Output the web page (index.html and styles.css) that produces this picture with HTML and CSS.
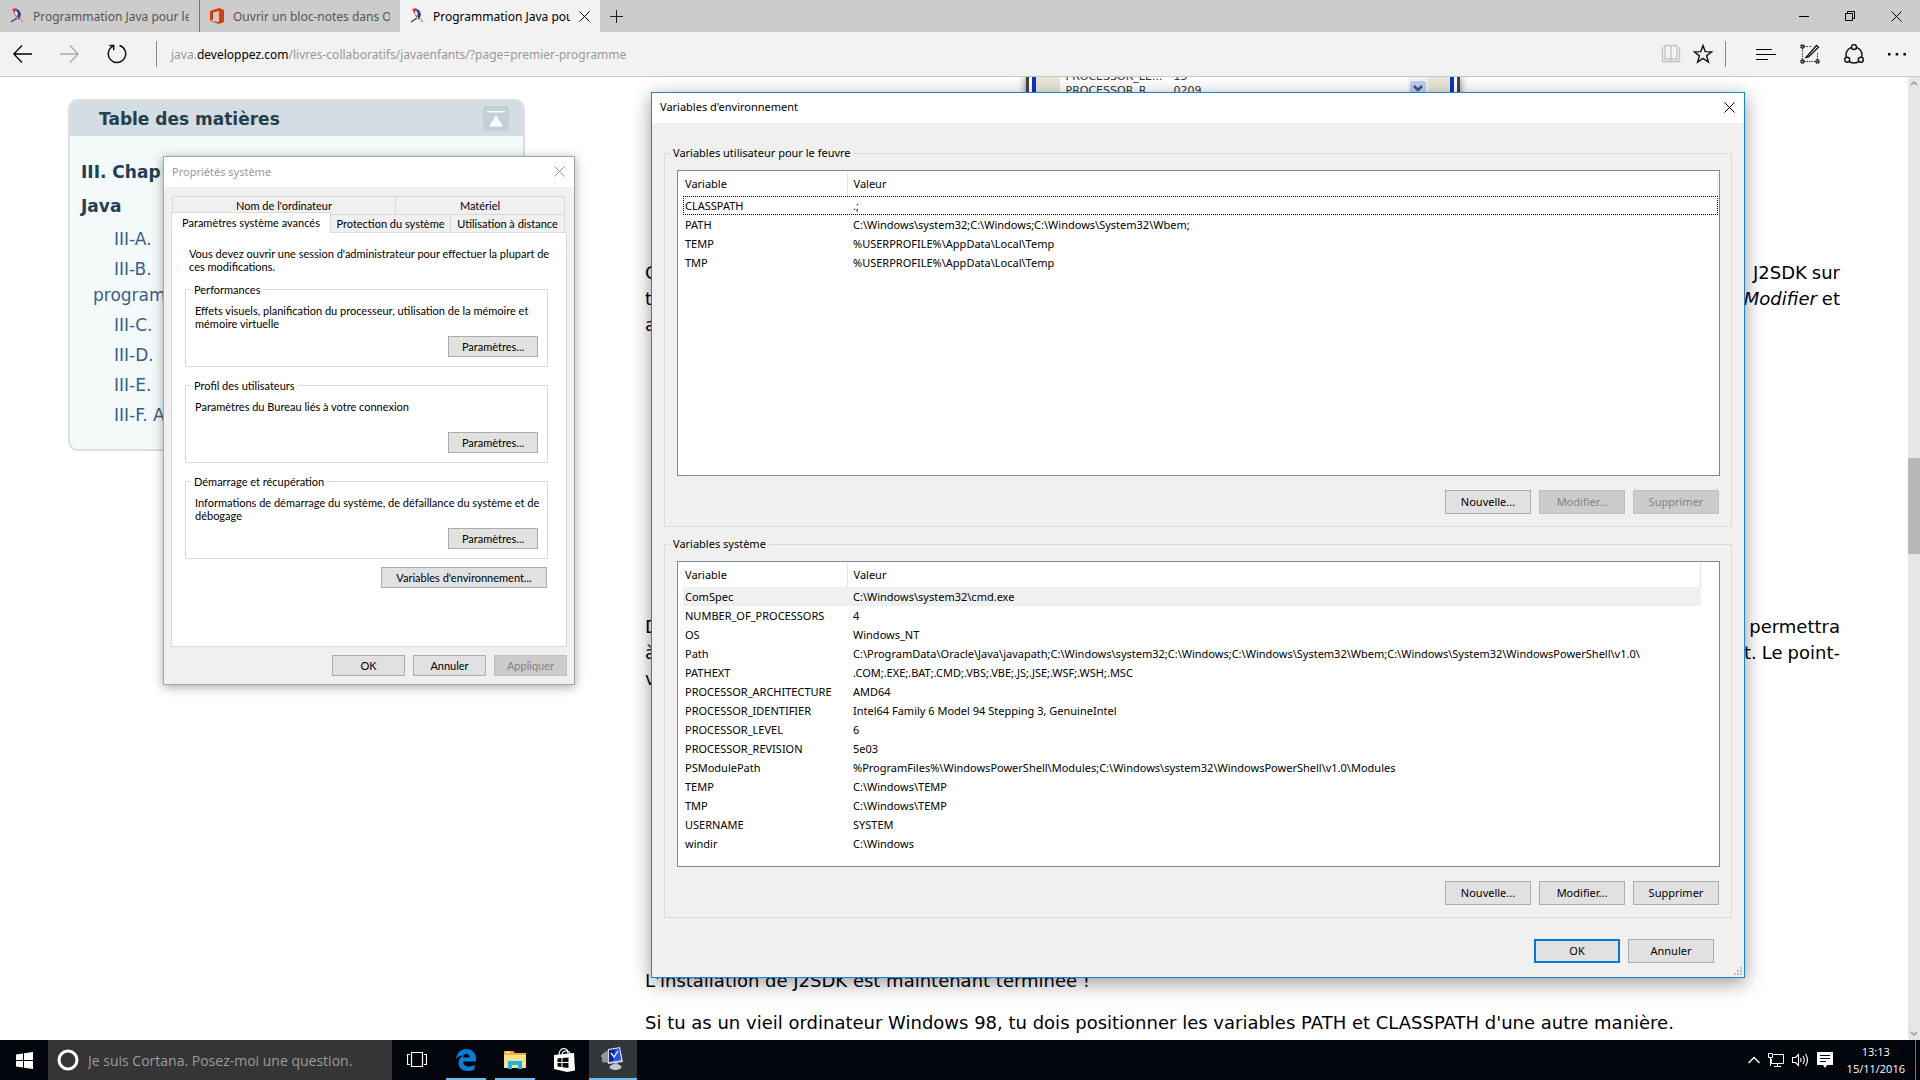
FILE: index.html
```html
<!DOCTYPE html>
<html lang="fr">
<head>
<meta charset="utf-8">
<title>Programmation Java pour les enfants</title>
<link rel="stylesheet" href="styles.css">
</head>
<body>
<svg class="defs" width="0" height="0" aria-hidden="true">
  <symbol id="bird" viewBox="0 0 14 16">
    <path d="M2 1 6 0 9 4 8 9 6 9 4 5Z" fill="#e23a3a"/>
    <path d="M5 3 8 4 7 8 5 6Z" fill="#fff"/>
    <path d="M6 1 9 2 11 6 10 10 8 12 8 6Z" fill="#2a3f9c"/>
    <path d="M7 10 1 14" stroke="#2a3f9c" stroke-width="1.500"/>
    <path d="M9 10 13 14" stroke="#e88a7a" stroke-width="1.500"/>
  </symbol>
  <symbol id="cross" viewBox="0 0 11 11">
    <path d="M.5.5l10 10M10.500.5l-10 10" fill="none" stroke="currentColor"/>
  </symbol>
</svg>

<header class="chrome">
  <div class="tabstrip">
    <div class="tab tab-ruled">
      <svg class="tab-icon" width="14" height="16"><use href="#bird"/></svg>
      <a class="tab-title" href="#">Programmation Java pour les enfants</a>
    </div>
    <div class="tab">
      <svg class="tab-icon" width="14" height="16" viewBox="0 0 14 16"><path d="M0 3 9 0 14 2V14L9 16 0 13 9 14V3L3 4.500V11.500L0 13Z" fill="#dc3e00"/></svg>
      <a class="tab-title" href="#">Ouvrir un bloc-notes dans OneNote</a>
    </div>
    <div class="tab tab-active">
      <svg class="tab-icon" width="14" height="16"><use href="#bird"/></svg>
      <a class="tab-title" href="#">Programmation Java pour les enfants</a>
      <button class="icon-button" aria-label="Fermer l'onglet"><svg width="11" height="11"><use href="#cross"/></svg></button>
    </div>
    <button class="icon-button new-tab" aria-label="Nouvel onglet"><svg width="13" height="13" viewBox="0 0 13 13"><path d="M6.500 0v13M0 6.500h13" stroke="#222"/></svg></button>
    <div class="window-controls">
      <button class="icon-button" aria-label="Réduire"><svg width="10" height="10" viewBox="0 0 10 10"><path d="M0 5.500h10" stroke="#000"/></svg></button>
      <button class="icon-button" aria-label="Restaurer"><svg width="10" height="10" viewBox="0 0 10 10"><path d="M.5 2.500h7v7h-7zM2.500 2.500v-2h7v7h-2" fill="none" stroke="#000"/></svg></button>
      <button class="icon-button" aria-label="Fermer"><svg width="11" height="11"><use href="#cross"/></svg></button>
    </div>
  </div>
  <div class="toolbar">
    <nav class="nav-buttons">
      <button class="icon-button" aria-label="Précédent"><svg width="19" height="18" viewBox="0 0 19 18"><path d="M19 9H1M9 .5.8 9 9 17.500" fill="none" stroke="#000" stroke-width="1.300"/></svg></button>
      <button class="icon-button" aria-label="Suivant"><svg width="19" height="18" viewBox="0 0 19 18"><path d="M0 9h18M10 .5 18.200 9 10 17.500" fill="none" stroke="#a8a8a8" stroke-width="1.300"/></svg></button>
      <button class="icon-button" aria-label="Actualiser"><svg width="20" height="20" viewBox="0 0 20 20"><path d="M12.500 1.500a8.700 8.700 0 1 1-6.500.6M2.500 1.600h4.200v4.600" fill="none" stroke="#111" stroke-width="1.500"/></svg></button>
    </nav>
    <a class="address" href="#">java.<b>developpez.com</b>/livres-collaboratifs/javaenfants/?page=premier-programme</a>
    <div class="page-tools">
      <button class="icon-button" aria-label="Mode lecture"><svg width="20" height="20" viewBox="0 0 20 20"><path d="M1.500 3v14.500H9q1 0 1 1 0-1 1-1h7.500V3M4 1.500h4q2 0 2 1.500 0-1.500 2-1.500h4V15h-4q-2 0-2 1.500Q10 15 8 15H4zM10 3v14" fill="none" stroke="#c4c4c4" stroke-width="1.300"/></svg></button>
      <button class="icon-button" aria-label="Favoris"><svg width="20" height="20" viewBox="0 0 20 20"><path d="M10 1.500l2.200 6.100 6.500.2-5.100 4 1.800 6.300L10 14.400l-5.400 3.700 1.800-6.300-5.100-4 6.500-.2z" fill="none" stroke="#111" stroke-width="1.400"/></svg></button>
    </div>
    <div class="hub-tools">
      <button class="icon-button" aria-label="Hub"><svg width="20" height="12" viewBox="0 0 20 12"><path d="M0 1.500h16M0 6.500h20M0 11.500h12" stroke="#000"/></svg></button>
      <button class="icon-button" aria-label="Annoter"><svg width="20" height="20" viewBox="0 0 20 20"><path d="M4 2.500h8M2.500 4v12M4 17.500h12M17.500 9v7" fill="none" stroke="#333" stroke-dasharray="1.500 1"/><path d="M1 1h3v3H1zM1 16h3v3H1zM16 16h3v3h-3z" fill="#888" stroke="#111"/><path d="M6 13.500 16.500 1.500l2 1.700L8.500 13z" fill="#fff" stroke="#111" stroke-width="1.300"/></svg></button>
      <button class="icon-button" aria-label="Partager"><svg width="20" height="20" viewBox="0 0 20 20" fill="#f2f2f2" stroke="#111" stroke-width="1.400"><circle cx="10" cy="11" r="8"/><circle cx="10" cy="3" r="2.500"/><circle cx="3.200" cy="15.800" r="2.500"/><circle cx="16.800" cy="15.800" r="2.500"/></svg></button>
      <button class="icon-button" aria-label="Plus"><svg width="18" height="4" viewBox="0 0 18 4"><path d="M0 1h2.500v2.500H0zM7.700 1h2.500v2.500H7.700zM15.400 1h2.500v2.500h-2.500z"/></svg></button>
    </div>
  </div>
</header>

<main class="viewport">
  <div class="page">
    <aside class="toc">
      <div class="toc-head">
        <h2>Table des matières</h2>
        <a class="toc-top" href="#" aria-label="Haut de page"><svg width="18" height="16" viewBox="0 0 18 16"><path d="M0 0h18v1.500H0zM9 4l6 10v1.500H3V14z" fill="#fff"/></svg></a>
      </div>
      <h3>III. Chap<br>Java</h3>
      <ul>
        <li><a href="#">III-A.</a></li>
        <li><a href="#">III-B.<br>programm</a></li>
        <li><a href="#">III-C.</a></li>
        <li><a href="#">III-D.</a></li>
        <li><a href="#">III-E.</a></li>
        <li><a href="#">III-F. A</a></li>
      </ul>
    </aside>
    <article class="article">
      <div class="figure figure-first">
        <div class="xp">
          <div class="xp-list">
            <div class="xp-rows">
              <span>PROCESSOR_LE...</span><span>15</span>
              <span>PROCESSOR_R...</span><span>0209</span>
            </div>
            <div class="xp-scroll"><svg width="16" height="16" viewBox="0 0 16 16"><rect width="16" height="16" rx="2" fill="#bccdf2"/><path d="M4 5l4 4 4-4" fill="none" stroke="#3f5287" stroke-width="2.500"/></svg></div>
          </div>
        </div>
      </div>
      <div class="para">
        <p class="line"><span>C</span><span class="words"><span>J2SDK</span><span>sur</span></span></p>
        <p class="line"><span>t</span><span class="words"><i>Modifier</i><span>et</span></span></p>
        <p class="line"><span>a</span></p>
      </div>
      <div class="figure"></div>
      <div class="para">
        <p class="line"><span>D</span><span>permettra</span></p>
        <p class="line"><span>à</span><span class="words"><span>t.</span><span>Le</span><span>point-</span></span></p>
        <p class="line"><span>v</span></p>
      </div>
      <div class="figure"></div>
      <p class="para">L'installation de J2SDK est maintenant terminée !</p>
      <p class="para">Si tu as un vieil ordinateur Windows 98, tu dois positionner les variables PATH et CLASSPATH d'une autre manière.</p>
    </article>
  </div>
  <div class="scrollbar">
    <svg width="8" height="6" viewBox="0 0 8 6"><path d="M1 5l3-3 3 3" fill="none" stroke="#999" stroke-width="1.500"/></svg>
    <div class="scroll-thumb"></div>
    <svg width="8" height="6" viewBox="0 0 8 6"><path d="M1 1l3 3 3-3" fill="none" stroke="#999" stroke-width="1.500"/></svg>
  </div>
</main>

<section class="window props" aria-label="Propriétés système">
  <div class="titlebar">
    <span>Propriétés système</span>
    <button class="icon-button" aria-label="Fermer"><svg width="11" height="11"><use href="#cross"/></svg></button>
  </div>
  <div class="props-body">
    <div class="tabs-back">
      <button class="ptab">Nom de l'ordinateur</button>
      <button class="ptab">Matériel</button>
    </div>
    <div class="tabs-front">
      <button class="ptab ptab-active">Paramètres système avancés</button>
      <button class="ptab">Protection du système</button>
      <button class="ptab">Utilisation à distance</button>
    </div>
    <div class="panel">
      <p class="intro">Vous devez ouvrir une session d'administrateur pour effectuer la plupart de ces modifications.</p>
      <fieldset class="pgroup">
        <legend>Performances</legend>
        <p>Effets visuels, planification du processeur, utilisation de la mémoire et mémoire virtuelle</p>
        <button class="button">Paramètres...</button>
      </fieldset>
      <fieldset class="pgroup">
        <legend>Profil des utilisateurs</legend>
        <p>Paramètres du Bureau liés à votre connexion</p>
        <button class="button">Paramètres...</button>
      </fieldset>
      <fieldset class="pgroup">
        <legend>Démarrage et récupération</legend>
        <p>Informations de démarrage du système, de défaillance du système et de débogage</p>
        <button class="button">Paramètres...</button>
      </fieldset>
      <button class="button env-button">Variables d'environnement...</button>
    </div>
    <div class="props-actions">
      <button class="button">OK</button>
      <button class="button">Annuler</button>
      <button class="button" disabled>Appliquer</button>
    </div>
  </div>
</section>

<section class="window env" aria-label="Variables d'environnement">
  <div class="titlebar">
    <span>Variables d'environnement</span>
    <button class="icon-button" aria-label="Fermer"><svg width="11" height="11"><use href="#cross"/></svg></button>
  </div>
  <div class="env-body">
    <fieldset class="egroup">
      <legend>Variables utilisateur pour le feuvre</legend>
      <div class="list">
        <table class="vars">
          <thead><tr><th>Variable</th><th>Valeur</th></tr></thead>
          <tbody>
            <tr class="focused"><td>CLASSPATH</td><td>.;</td></tr>
            <tr><td>PATH</td><td>C:\Windows\system32;C:\Windows;C:\Windows\System32\Wbem;</td></tr>
            <tr><td>TEMP</td><td>%USERPROFILE%\AppData\Local\Temp</td></tr>
            <tr><td>TMP</td><td>%USERPROFILE%\AppData\Local\Temp</td></tr>
          </tbody>
        </table>
      </div>
      <div class="actions">
        <button class="button">Nouvelle...</button>
        <button class="button" disabled>Modifier...</button>
        <button class="button" disabled>Supprimer</button>
      </div>
    </fieldset>
    <fieldset class="egroup">
      <legend>Variables système</legend>
      <div class="list list-inset">
        <table class="vars">
          <thead><tr><th>Variable</th><th>Valeur</th></tr></thead>
          <tbody>
            <tr class="selected"><td>ComSpec</td><td>C:\Windows\system32\cmd.exe</td></tr>
            <tr><td>NUMBER_OF_PROCESSORS</td><td>4</td></tr>
            <tr><td>OS</td><td>Windows_NT</td></tr>
            <tr><td>Path</td><td>C:\ProgramData\Oracle\Java\javapath;C:\Windows\system32;C:\Windows;C:\Windows\System32\Wbem;C:\Windows\System32\WindowsPowerShell\v1.0\</td></tr>
            <tr><td>PATHEXT</td><td>.COM;.EXE;.BAT;.CMD;.VBS;.VBE;.JS;.JSE;.WSF;.WSH;.MSC</td></tr>
            <tr><td>PROCESSOR_ARCHITECTURE</td><td>AMD64</td></tr>
            <tr><td>PROCESSOR_IDENTIFIER</td><td>Intel64 Family 6 Model 94 Stepping 3, GenuineIntel</td></tr>
            <tr><td>PROCESSOR_LEVEL</td><td>6</td></tr>
            <tr><td>PROCESSOR_REVISION</td><td>5e03</td></tr>
            <tr><td>PSModulePath</td><td>%ProgramFiles%\WindowsPowerShell\Modules;C:\Windows\system32\WindowsPowerShell\v1.0\Modules</td></tr>
            <tr><td>TEMP</td><td>C:\Windows\TEMP</td></tr>
            <tr><td>TMP</td><td>C:\Windows\TEMP</td></tr>
            <tr><td>USERNAME</td><td>SYSTEM</td></tr>
            <tr><td>windir</td><td>C:\Windows</td></tr>
          </tbody>
        </table>
      </div>
      <div class="actions">
        <button class="button">Nouvelle...</button>
        <button class="button">Modifier...</button>
        <button class="button">Supprimer</button>
      </div>
    </fieldset>
    <div class="actions env-actions">
      <button class="button button-default">OK</button>
      <button class="button">Annuler</button>
    </div>
  </div>
  <svg class="grip" width="8" height="8" viewBox="0 0 8 8"><path d="M6 0h2v2H6zM3 3h2v2H3zM6 3h2v2H6zM0 6h2v2H0zM3 6h2v2H3zM6 6h2v2H6z" fill="#bfbfbf"/></svg>
</section>

<footer class="taskbar">
  <button class="task start" aria-label="Démarrer"><svg width="17" height="17" viewBox="0 0 17 17"><path d="M0 2.500 7 1.500V8H0zM8 1.300 17 0V8H8zM0 9h7v6.500L0 14.500zM8 9h9v8L8 15.700z" fill="#fff"/></svg></button>
  <label class="search">
    <svg width="22" height="22" viewBox="0 0 22 22"><circle cx="11" cy="11" r="9" fill="none" stroke="#fff" stroke-width="3"/></svg>
    <input type="text" placeholder="Je suis Cortana. Posez-moi une question." aria-label="Recherche">
  </label>
  <div class="tasks">
    <button class="task" aria-label="Affichage des tâches"><svg width="20" height="16" viewBox="0 0 20 16"><path d="M4.500.5h11v14h-11zM3 2.500H.5v10H3M17 2.500h2.500v10H17" fill="none" stroke="#fff" stroke-width="1.200"/></svg></button>
    <button class="task running" aria-label="Edge"><svg width="20" height="22" viewBox="0 0 20 22"><path d="M0 10C1 3.500 5 0 10.500 0 16.500 0 20 4.500 20 10v2.500H7c.2 3.500 3 5 6 5 2.300 0 4-.6 5.500-1.500v4.300C16.800 21.400 14.500 22 12 22 6 22 2.500 18.500 2.500 14c0-3.500 2-6 5-7.500C4.500 6.500 1.500 7.500 0 10zm7-1.500h6.700C13.700 6 12.500 4.700 10.500 4.700S7.200 6.200 7 8.500z" fill="#0a7ddb"/></svg></button>
    <button class="task running" aria-label="Explorateur"><svg width="22" height="18" viewBox="0 0 22 18"><path d="M0 0h9l2 2h11v15H0z" fill="#e9b43c"/><path d="M0 4h22v13H0z" fill="#fbe08b"/><path d="M4 18v-8h14v8h-4v-4H8v4z" fill="#1cb4ec"/><path d="M2 1h4v1H2z" fill="#fff"/></svg></button>
    <button class="task" aria-label="Store"><svg width="21" height="24" viewBox="0 0 21 24"><path d="M0 7 20 5l1 17.500L13 24 0 21z" fill="#fff"/><path d="M5 7C5 2 8 .6 10 .6S14 2 14 6M8 6c1-4 8-4 8 0" fill="none" stroke="#fff" stroke-width="1.200"/><path d="M3.500 10.500 7.500 10v4h-4zM8.500 10l6-.6V14h-6zM3.500 15h4v4l-4-.6zM8.500 15h6v5l-6-.8z" fill="#05080d"/></svg></button>
    <button class="task current" aria-label="Propriétés système"><svg width="24" height="24" viewBox="0 0 24 24"><path d="M1 7 7 3v13l-6-1z" fill="#8f979e"/><path d="M0 8h2v2H0z" fill="#4c4"/><path d="M7 2 19 0l3 15-15 2z" fill="#d4d9df"/><path d="M8 3 18 1.500 20 13 8 15z" fill="#0c1fae"/><path d="M14 2.200 18 1.500 20 13 12 14.400z" fill="#2f55e8"/><path d="M10 6l3 4 4-6" fill="none" stroke="#fff" stroke-width="1.300"/><path d="M13 16h4v3h-4z" fill="#999"/><ellipse cx="14.500" cy="20" rx="6" ry="3" fill="#c4c8cc"/></svg></button>
  </div>
  <div class="tray">
    <svg width="12" height="8" viewBox="0 0 12 8"><path d="M.5 7 6 1.500 11.500 7" fill="none" stroke="#fff" stroke-width="1.400"/></svg>
    <svg width="16" height="14" viewBox="0 0 16 14"><path d="M5.500 1.500h10v9h-12V6M9.500 11v2M6 13.500h7M.5.5h4v4h-4zM2.500 5v8" fill="none" stroke="#fff"/></svg>
    <svg width="17" height="14" viewBox="0 0 17 14"><path d="M.5 4.500h3l3-3v11l-3-3h-3zM8.500 5q1 2 0 4M11 3q2.500 4 0 8M13.500 1q4 6 0 12" fill="none" stroke="#fff" stroke-width="1.100"/></svg>
    <svg width="16" height="16" viewBox="0 0 16 16"><path d="M0 0h16v13h-6l-2 3-2-3H0z" fill="#fff"/><path d="M3 3.500h10M3 6.500h10M3 9.500h6" stroke="#05080d"/></svg>
    <div class="clock"><time>13:13</time><time>15/11/2016</time></div>
  </div>
</footer>
</body>
</html>
```
FILE: styles.css
```css
* {
  box-sizing: border-box;
}

body {
  margin: 0;
  height: 100vh;
  display: flex;
  flex-direction: column;
  overflow: hidden;
  background: #fff;
  color: #000;
  font-family: "Noto Sans", "Segoe UI", sans-serif;
  font-size: 11px;
}

button,
input {
  font: inherit;
  color: inherit;
}

a {
  color: inherit;
  text-decoration: none;
}

p,
h2,
h3,
ul {
  margin: 0;
  padding: 0;
}

svg {
  display: block;
  flex: none;
}

.defs {
  position: absolute;
}

.icon-button {
  display: flex;
  align-items: center;
  justify-content: center;
  padding: 0;
  border: 0;
  background: none;
}

/* Browser chrome */

.chrome {
  flex: none;
  background: #f2f2f2;
  border-bottom: 1px solid #c8c8c8;
}

.tabstrip {
  display: flex;
  height: 32px;
  background: #ccc;
  color: #555;
  font-size: 12px;
}

.tab {
  display: flex;
  align-items: center;
  gap: 9px;
  width: 200px;
  padding: 0 10px;
}

.tab-ruled {
  border-right: 1px solid #777;
}

.tab-active {
  background: #f2f2f2;
  color: #000;
}

.tab-title {
  flex: 1;
  min-width: 0;
  overflow: hidden;
  white-space: nowrap;
}

.new-tab {
  width: 32px;
}

.window-controls {
  display: flex;
  gap: 36px;
  margin-left: auto;
  padding-right: 18px;
  color: #000;
}

.toolbar {
  display: flex;
  align-items: center;
  height: 44px;
}

.nav-buttons {
  display: flex;
  align-items: center;
  gap: 28px;
  height: 26px;
  padding: 0 29px 0 13px;
  border-right: 1px solid #8a8a8a;
}

.address {
  flex: 1;
  padding-left: 14px;
  color: #999;
  font-size: 12px;
}

.address b {
  color: #000;
  font-weight: 400;
}

.page-tools {
  display: flex;
  gap: 12px;
  align-items: center;
  height: 26px;
  padding-right: 12px;
  border-right: 1px solid #8a8a8a;
}

.hub-tools {
  display: flex;
  gap: 24px;
  align-items: center;
  padding: 0 14px 0 30px;
}

/* Web page */

.viewport {
  flex: 1;
  min-height: 0;
  display: flex;
  font-family: Verdana, "DejaVu Sans", sans-serif;
  font-size: 18px;
  line-height: 26px;
}

.page {
  flex: 1;
  min-width: 0;
  display: flex;
  align-items: flex-start;
  gap: 120px;
  padding: 0 68px;
  overflow: hidden;
}

.toc {
  flex: none;
  width: 457px;
  margin-top: 22px;
  padding-bottom: 21px;
  border: 2px solid #dcdedf;
  border-radius: 10px;
  background: #f4f9fa;
  color: #365f88;
  font-size: 17px;
  overflow: hidden;
}

.toc-head {
  display: flex;
  align-items: center;
  justify-content: space-between;
  height: 35px;
  padding: 0 14px 0 29px;
  background: #d4dde3;
  color: #263f4c;
}

.toc h2,
.toc h3 {
  font-size: 17px;
}

.toc h3 {
  margin: 19px 0 0 11px;
  color: #1e3f55;
  line-height: 34px;
}

.toc-top {
  display: flex;
  align-items: center;
  justify-content: center;
  width: 26px;
  height: 25px;
  border-radius: 4px;
  background: #c3d0d6;
}

.toc ul {
  display: grid;
  gap: 4px;
  padding: 3px 0 0 23px;
  list-style: none;
}

.toc li {
  text-indent: 21px;
}

.article {
  flex: 1;
  min-width: 0;
}

.para {
  margin-bottom: 16px;
}

.line {
  display: flex;
  justify-content: space-between;
}

.words {
  display: flex;
  gap: 5px;
}

.figure {
  height: 244px;
  margin-bottom: 16px;
}

.figure-first {
  display: flex;
  justify-content: center;
  height: 167px;
}

.xp {
  display: flex;
  width: 434px;
  padding: 0 3px;
  border: solid #444;
  border-width: 0 3px;
  box-shadow: 0 0 8px #777;
}

.xp-list {
  flex: 1;
  display: flex;
  border: solid #0a36c4;
  border-width: 0 4px;
  padding: 0 22px 0 24px;
  background: #e8e6d6;
}

.xp-rows {
  flex: 1;
  display: grid;
  grid-template-columns: 108px 1fr;
  align-content: start;
  margin-top: -7px;
  padding-left: 6px;
  background: #fff;
  color: #333;
  font-family: Tahoma, "DejaVu Sans", sans-serif;
  font-size: 11px;
  line-height: 14px;
}

.xp-scroll {
  padding: 4px 2px;
  background: #f3f3f6;
}

.scrollbar {
  display: flex;
  flex-direction: column;
  align-items: center;
  width: 12px;
  padding: 3px 0;
  background: #e6e6e6;
}

.scroll-thumb {
  align-self: stretch;
  height: 10%;
  margin: 372px 0 auto;
  background: #b8b8b8;
}

/* Windows */

.window {
  position: absolute;
  background: #f0f0f0;
}

.titlebar {
  display: flex;
  align-items: center;
  justify-content: space-between;
  height: 30px;
  padding: 0 9px 2px 8px;
  background: #fff;
}

.button {
  height: 21px;
  padding: 0;
  border: 1px solid #adadad;
  background: #e1e1e1;
  color: #000;
}

.button:disabled {
  border-color: #bfbfbf;
  background: #ccc;
  color: #838383;
}

.button-default {
  border: 2px solid #0078d7;
}

fieldset {
  min-width: 0;
  margin: 0;
  border: 1px solid #dcdcdc;
}

/* System properties */

.props {
  left: 163px;
  top: 156px;
  width: 412px;
  border: 1px solid #a6a6a6;
  box-shadow: 0 2px 10px rgba(0, 0, 0, .35);
}

.props .titlebar {
  color: #999;
}

.props-body {
  padding: 9px 7px 8px;
  font-family: "Microsoft Sans Serif", Lato, sans-serif;
  font-size: 11px;
  line-height: 13px;
}

.tabs-back,
.tabs-front {
  display: grid;
  margin: 0 2px 0 1px;
}

.tabs-back {
  grid-template-columns: 224px 1fr;
}

.tabs-front {
  grid-template-columns: 159px 120px 1fr;
}

.ptab {
  height: 18px;
  padding: 0;
  border: 1px solid #d9d9d9;
  border-width: 1px 1px 0 0;
  background: #f0f0f0;
}

.ptab:first-child {
  border-left-width: 1px;
}

.ptab-active {
  z-index: 1;
  height: 21px;
  margin: -2px 0 -1px -1px;
  padding-bottom: 2px;
  background: #fff;
}

.panel {
  display: flex;
  flex-direction: column;
  min-height: 415px;
  padding: 14px 8px 0 13px;
  border: 1px solid #dcdcdc;
  background: #fff;
}

.intro {
  margin: 0 0 10px 4px;
}

.pgroup {
  height: 84px;
  margin: 0 10px 12px 0;
  padding: 8px 2px 0 9px;
}

.pgroup:last-of-type {
  margin-bottom: 8px;
}

.pgroup legend {
  padding: 0 3px;
  margin-left: -4px;
}

.pgroup p {
  min-height: 26px;
}

.pgroup .button {
  display: block;
  width: 90px;
  margin: 6px 7px 0 auto;
}

.env-button {
  align-self: flex-end;
  width: 166px;
  margin-right: 11px;
}

.props-actions {
  display: flex;
  justify-content: flex-end;
  gap: 8px;
  padding-top: 8px;
}

.props-actions .button {
  width: 73px;
}

/* Environment variables */

.env {
  left: 651px;
  top: 92px;
  width: 1094px;
  border: 1px solid #1883d7;
  box-shadow: 0 5px 18px rgba(0, 0, 0, .4);
  line-height: 16px;
}

.env-body {
  display: grid;
  gap: 9px;
  padding: 22px 12px 14px;
}

.egroup {
  padding: 9px 11px 12px 12px;
}

.egroup legend {
  padding: 0 3px;
  margin-left: -7px;
}

.list {
  height: 306px;
  padding: 1px 1px 0 5px;
  border: 1px solid #828790;
  background: #fff;
}

.list-inset {
  padding-right: 18px;
}

.vars {
  width: 100%;
  table-layout: fixed;
  border-collapse: collapse;
  white-space: nowrap;
}

.vars th {
  height: 24px;
  padding: 0 0 0 2px;
  border-right: 1px solid #e5e5e5;
  font-weight: 400;
  text-align: left;
}

.vars th:first-child {
  width: 164px;
}

.vars td {
  height: 19px;
  padding: 0 0 0 2px;
}

.vars th + th,
.vars td + td {
  padding-left: 6px;
}

.focused {
  outline: 1px dotted #000;
  outline-offset: -1px;
}

.selected {
  background: #f0f0f0;
}

.actions {
  display: flex;
  justify-content: flex-end;
  gap: 8px;
  padding: 14px 1px 0 0;
}

.actions .button {
  width: 86px;
  height: 24px;
}

.env-actions {
  padding: 12px 18px 0 0;
}

.grip {
  position: absolute;
  right: 2px;
  bottom: 2px;
}

/* Taskbar */

.taskbar {
  flex: none;
  display: flex;
  height: 40px;
  background: #02050b;
  color: #fff;
  font-family: "Open Sans", "Segoe UI", sans-serif;
}

.task {
  display: flex;
  align-items: center;
  justify-content: center;
  width: 48px;
  padding: 0;
  border: 0;
  background: none;
}

.search {
  display: flex;
  align-items: center;
  gap: 9px;
  width: 344px;
  padding: 0 9px;
  background: #353535;
}

.search input {
  flex: 1;
  min-width: 0;
  padding: 0;
  border: 0;
  background: none;
  font-size: 14px;
}

.search input::placeholder {
  color: #9c9c9c;
}

.tasks {
  display: flex;
  gap: 1px;
  padding-left: 1px;
}

.running {
  background: linear-gradient(#76b9ed, #76b9ed) bottom / 40px 2px no-repeat;
}

.current {
  background: #31363b;
  border-bottom: 2px solid #76b9ed;
}

.tray {
  display: flex;
  align-items: center;
  gap: 8px;
  margin: 0 4px 0 auto;
  padding-right: 10px;
  border-right: 1px solid #777;
}

.clock {
  display: grid;
  padding-left: 6px;
  font-size: 11px;
  line-height: 17px;
  text-align: center;
}
```
